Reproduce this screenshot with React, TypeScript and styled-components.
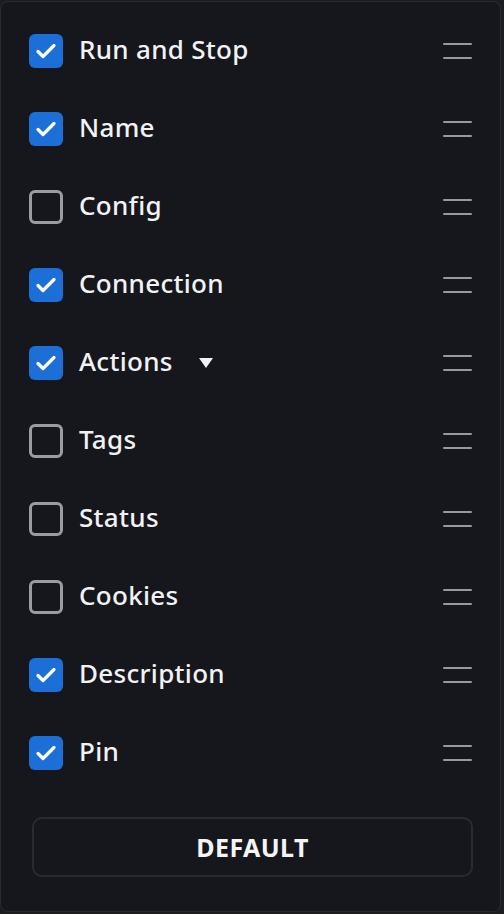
import React, { useState } from "react";
import styled, { createGlobalStyle } from "styled-components";

const GlobalStyle = createGlobalStyle`
  html, body {
    margin: 0;
    padding: 0;
    background: #1c1d22;
  }
  body {
    font-family: "Noto Sans", "Open Sans", sans-serif;
  }
`;

type Column = {
  id: string;
  label: string;
  checked: boolean;
  hasMenu?: boolean;
};

const initialColumns: Column[] = [
  { id: "run", label: "Run and Stop", checked: true },
  { id: "name", label: "Name", checked: true },
  { id: "config", label: "Config", checked: false },
  { id: "connection", label: "Connection", checked: true },
  { id: "actions", label: "Actions", checked: true, hasMenu: true },
  { id: "tags", label: "Tags", checked: false },
  { id: "status", label: "Status", checked: false },
  { id: "cookies", label: "Cookies", checked: false },
  { id: "description", label: "Description", checked: true },
  { id: "pin", label: "Pin", checked: true },
];

const App = () => {
  const [columns, setColumns] = useState<Column[]>(initialColumns);

  const toggle = (id: string) =>
    setColumns((cols) =>
      cols.map((c) => (c.id === id ? { ...c, checked: !c.checked } : c))
    );

  return (
    <>
      <GlobalStyle />
      <Panel>
        <List>
          {columns.map((col) => (
            <Row key={col.id}>
              <Check $checked={col.checked} onClick={() => toggle(col.id)}>
                {col.checked && (
                  <svg width="24" height="24" viewBox="0 0 24 24">
                    <path
                      d="M4 12.5l5 5L20 6.5"
                      fill="none"
                      stroke="#fff"
                      strokeWidth="3.2"
                      strokeLinecap="round"
                      strokeLinejoin="round"
                    />
                  </svg>
                )}
              </Check>
              <Label>
                {col.label}
                {col.hasMenu && <Caret />}
              </Label>
              <Handle>
                <span />
                <span />
              </Handle>
            </Row>
          ))}
        </List>
        <DefaultButton onClick={() => setColumns(initialColumns)}>
          DEFAULT
        </DefaultButton>
      </Panel>
    </>
  );
};

export default App;

const Panel = styled.div`
  box-sizing: border-box;
  width: 501px;
  height: 911px;
  margin-top: 1px;
  background: #16171c;
  border: 1px solid #2a2b30;
  border-radius: 8px;
  padding: 10px 28px 0 28px;
  display: flex;
  flex-direction: column;
`;

const List = styled.div`
  display: flex;
  flex-direction: column;
`;

const Row = styled.div`
  display: flex;
  align-items: center;
  height: 78px;
`;

const Check = styled.div<{ $checked: boolean }>`
  box-sizing: border-box;
  width: 34px;
  height: 34px;
  flex: 0 0 34px;
  border-radius: 6px;
  display: flex;
  align-items: center;
  justify-content: center;
  cursor: pointer;
  background: ${({ $checked }) => ($checked ? "#1d6fd8" : "transparent")};
  border: ${({ $checked }) =>
    $checked ? "none" : "3px solid #9c9ca0"};
`;

const Label = styled.div`
  flex: 1;
  margin-left: 16px;
  display: flex;
  align-items: center;
  color: #f2f2f4;
  font-size: 26px;
  font-weight: 500;
  letter-spacing: 0.3px;
  line-height: 1;
  padding-bottom: 4px;
`;

const Caret = styled.span`
  margin-left: 26px;
  margin-top: 4px;
  width: 0;
  height: 0;
  border-left: 7px solid transparent;
  border-right: 7px solid transparent;
  border-top: 10px solid #f2f2f4;
`;

const Handle = styled.div`
  width: 29px;
  display: flex;
  flex-direction: column;
  gap: 12px;

  span {
    display: block;
    height: 2px;
    background: #9a9a9e;
    border-radius: 1px;
  }
`;

const DefaultButton = styled.button`
  box-sizing: border-box;
  margin-top: 25px;
  margin-left: 3px;
  width: 441px;
  height: 60px;
  background: transparent;
  border: 2px solid #2a2b31;
  border-radius: 10px;
  color: #f4f4f6;
  font-family: "Noto Sans", "Open Sans", sans-serif;
  font-size: 25px;
  font-weight: 700;
  letter-spacing: 0.4px;
  cursor: pointer;
`;
